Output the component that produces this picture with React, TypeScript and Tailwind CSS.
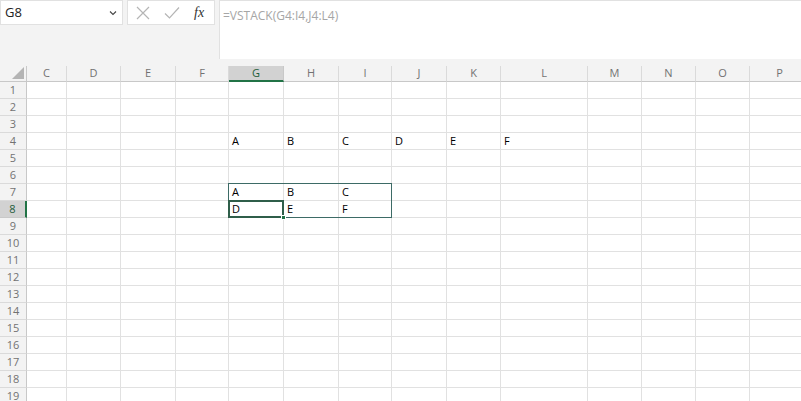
import React from 'react'

const COLS: [string, number][] = [
  ['C', 40],
  ['D', 54],
  ['E', 55],
  ['F', 53],
  ['G', 55],
  ['H', 55],
  ['I', 53],
  ['J', 55],
  ['K', 54],
  ['L', 87],
  ['M', 54],
  ['N', 54],
  ['O', 54],
  ['P', 60],
]

const DATA: Record<string, string> = {
  G4: 'A',
  H4: 'B',
  I4: 'C',
  J4: 'D',
  K4: 'E',
  L4: 'F',
  G7: 'A',
  H7: 'B',
  I7: 'C',
  G8: 'D',
  H8: 'E',
  I8: 'F',
}

const ROWS = Array.from({ length: 19 }, (_, i) => i + 1)

function FormulaBar() {
  return (
    <div className="flex h-[66px] bg-[#f3f3f3]">
      {/* Name box */}
      <div className="flex h-[25px] w-[123px] items-center justify-between border border-[#e1e1e1] bg-white pl-[4px] pr-[4px]">
        <span className="text-[13px] text-[#222]">G8</span>
        <svg width="8" height="6" viewBox="0 0 8 6" className="mr-[1px]">
          <path d="M1 1.5 L4 4.5 L7 1.5" fill="none" stroke="#444" strokeWidth="1.1" />
        </svg>
      </div>
      {/* Cancel / enter / fx */}
      <div className="ml-[4px] flex h-[25px] w-[88px] items-center border border-[#e1e1e1] bg-white">
        <svg width="14" height="14" viewBox="0 0 14 14" className="ml-[8px]">
          <path d="M1 1 L13 13 M13 1 L1 13" stroke="#b5b5b5" strokeWidth="1.2" />
        </svg>
        <svg width="16" height="14" viewBox="0 0 16 14" className="ml-[14px]">
          <path d="M1 7.5 L5.5 12 L15 1.5" fill="none" stroke="#b5b5b5" strokeWidth="1.2" />
        </svg>
        <span
          className="ml-[14px] text-[14px] italic text-[#333]"
          style={{ fontFamily: '"Liberation Serif", serif' }}
        >
          fx
        </span>
      </div>
      {/* Formula input */}
      <div className="ml-[4px] h-[59px] flex-1 border-t border-l border-[#e1e1e1] bg-white pl-[3px] pt-[1px]">
        <span className="text-[12px] text-[#a6a6a6]">=VSTACK(G4:I4,J4:L4)</span>
      </div>
    </div>
  )
}

function Sheet() {
  const template = `27px ${COLS.map(([, w]) => `${w}px`).join(' ')}`
  return (
    <div className="relative">
      <div className="grid" style={{ gridTemplateColumns: template }}>
        {/* corner */}
        <div className="relative h-[16px] border-r border-b border-[#c8c8c8] bg-[#f3f3f3]">
          <svg width="12" height="12" viewBox="0 0 12 12" className="absolute right-[2px] bottom-[2px]">
            <path d="M12 0 L12 12 L0 12 Z" fill="#b4b4b4" />
          </svg>
        </div>
        {COLS.map(([c]) =>
          c === 'G' ? (
            <div
              key={c}
              className="flex h-[16px] items-center justify-center border-r border-b-2 border-r-[#c8c8c8] border-b-[#217346] bg-[#d2d2d2] text-[11px] font-medium text-[#1e5d3a]"
            >
              {c}
            </div>
          ) : (
            <div
              key={c}
              className="flex h-[16px] items-center justify-center border-r border-b border-r-[#dadada] border-b-[#c8c8c8] bg-[#f3f3f3] text-[11px] text-[#727272]"
            >
              {c}
            </div>
          ),
        )}
        {ROWS.map((r) => (
          <React.Fragment key={r}>
            {r === 8 ? (
              <div className="flex h-[17px] items-center justify-center border-r-2 border-b border-r-[#217346] border-b-[#c8c8c8] bg-[#d2d2d2] text-[11px] font-medium text-[#1e5d3a]">
                {r}
              </div>
            ) : (
              <div className="flex h-[17px] items-center justify-center border-r border-b border-r-[#c8c8c8] border-b-[#dadada] bg-[#f3f3f3] text-[11px] text-[#727272]">
                {r}
              </div>
            )}
            {COLS.map(([c]) => (
              <div
                key={c}
                className="flex h-[17px] items-center border-r border-b border-[#e1e1e1] bg-white pl-[3px] text-[11px] text-black"
              >
                {DATA[`${c}${r}`] ?? ''}
              </div>
            ))}
          </React.Fragment>
        ))}
      </div>

      {/* selected range G7:I8 */}
      <div className="pointer-events-none absolute left-[228px] top-[117px] h-[35px] w-[164px] border border-[#3d6b66]" />
      {/* active cell G8 */}
      <div className="pointer-events-none absolute left-[228px] top-[134px] h-[18px] w-[56px] border-2 border-[#2f5e4a]" />
      {/* fill handle */}
      <div className="pointer-events-none absolute left-[281px] top-[149px] h-[5px] w-[5px] border border-white bg-[#217346]" />
    </div>
  )
}

export default function App() {
  return (
    <div
      className="h-[401px] w-[801px] overflow-hidden bg-white"
      style={{ fontFamily: '"Open Sans", "Noto Sans", sans-serif' }}
    >
      <FormulaBar />
      <Sheet />
    </div>
  )
}
